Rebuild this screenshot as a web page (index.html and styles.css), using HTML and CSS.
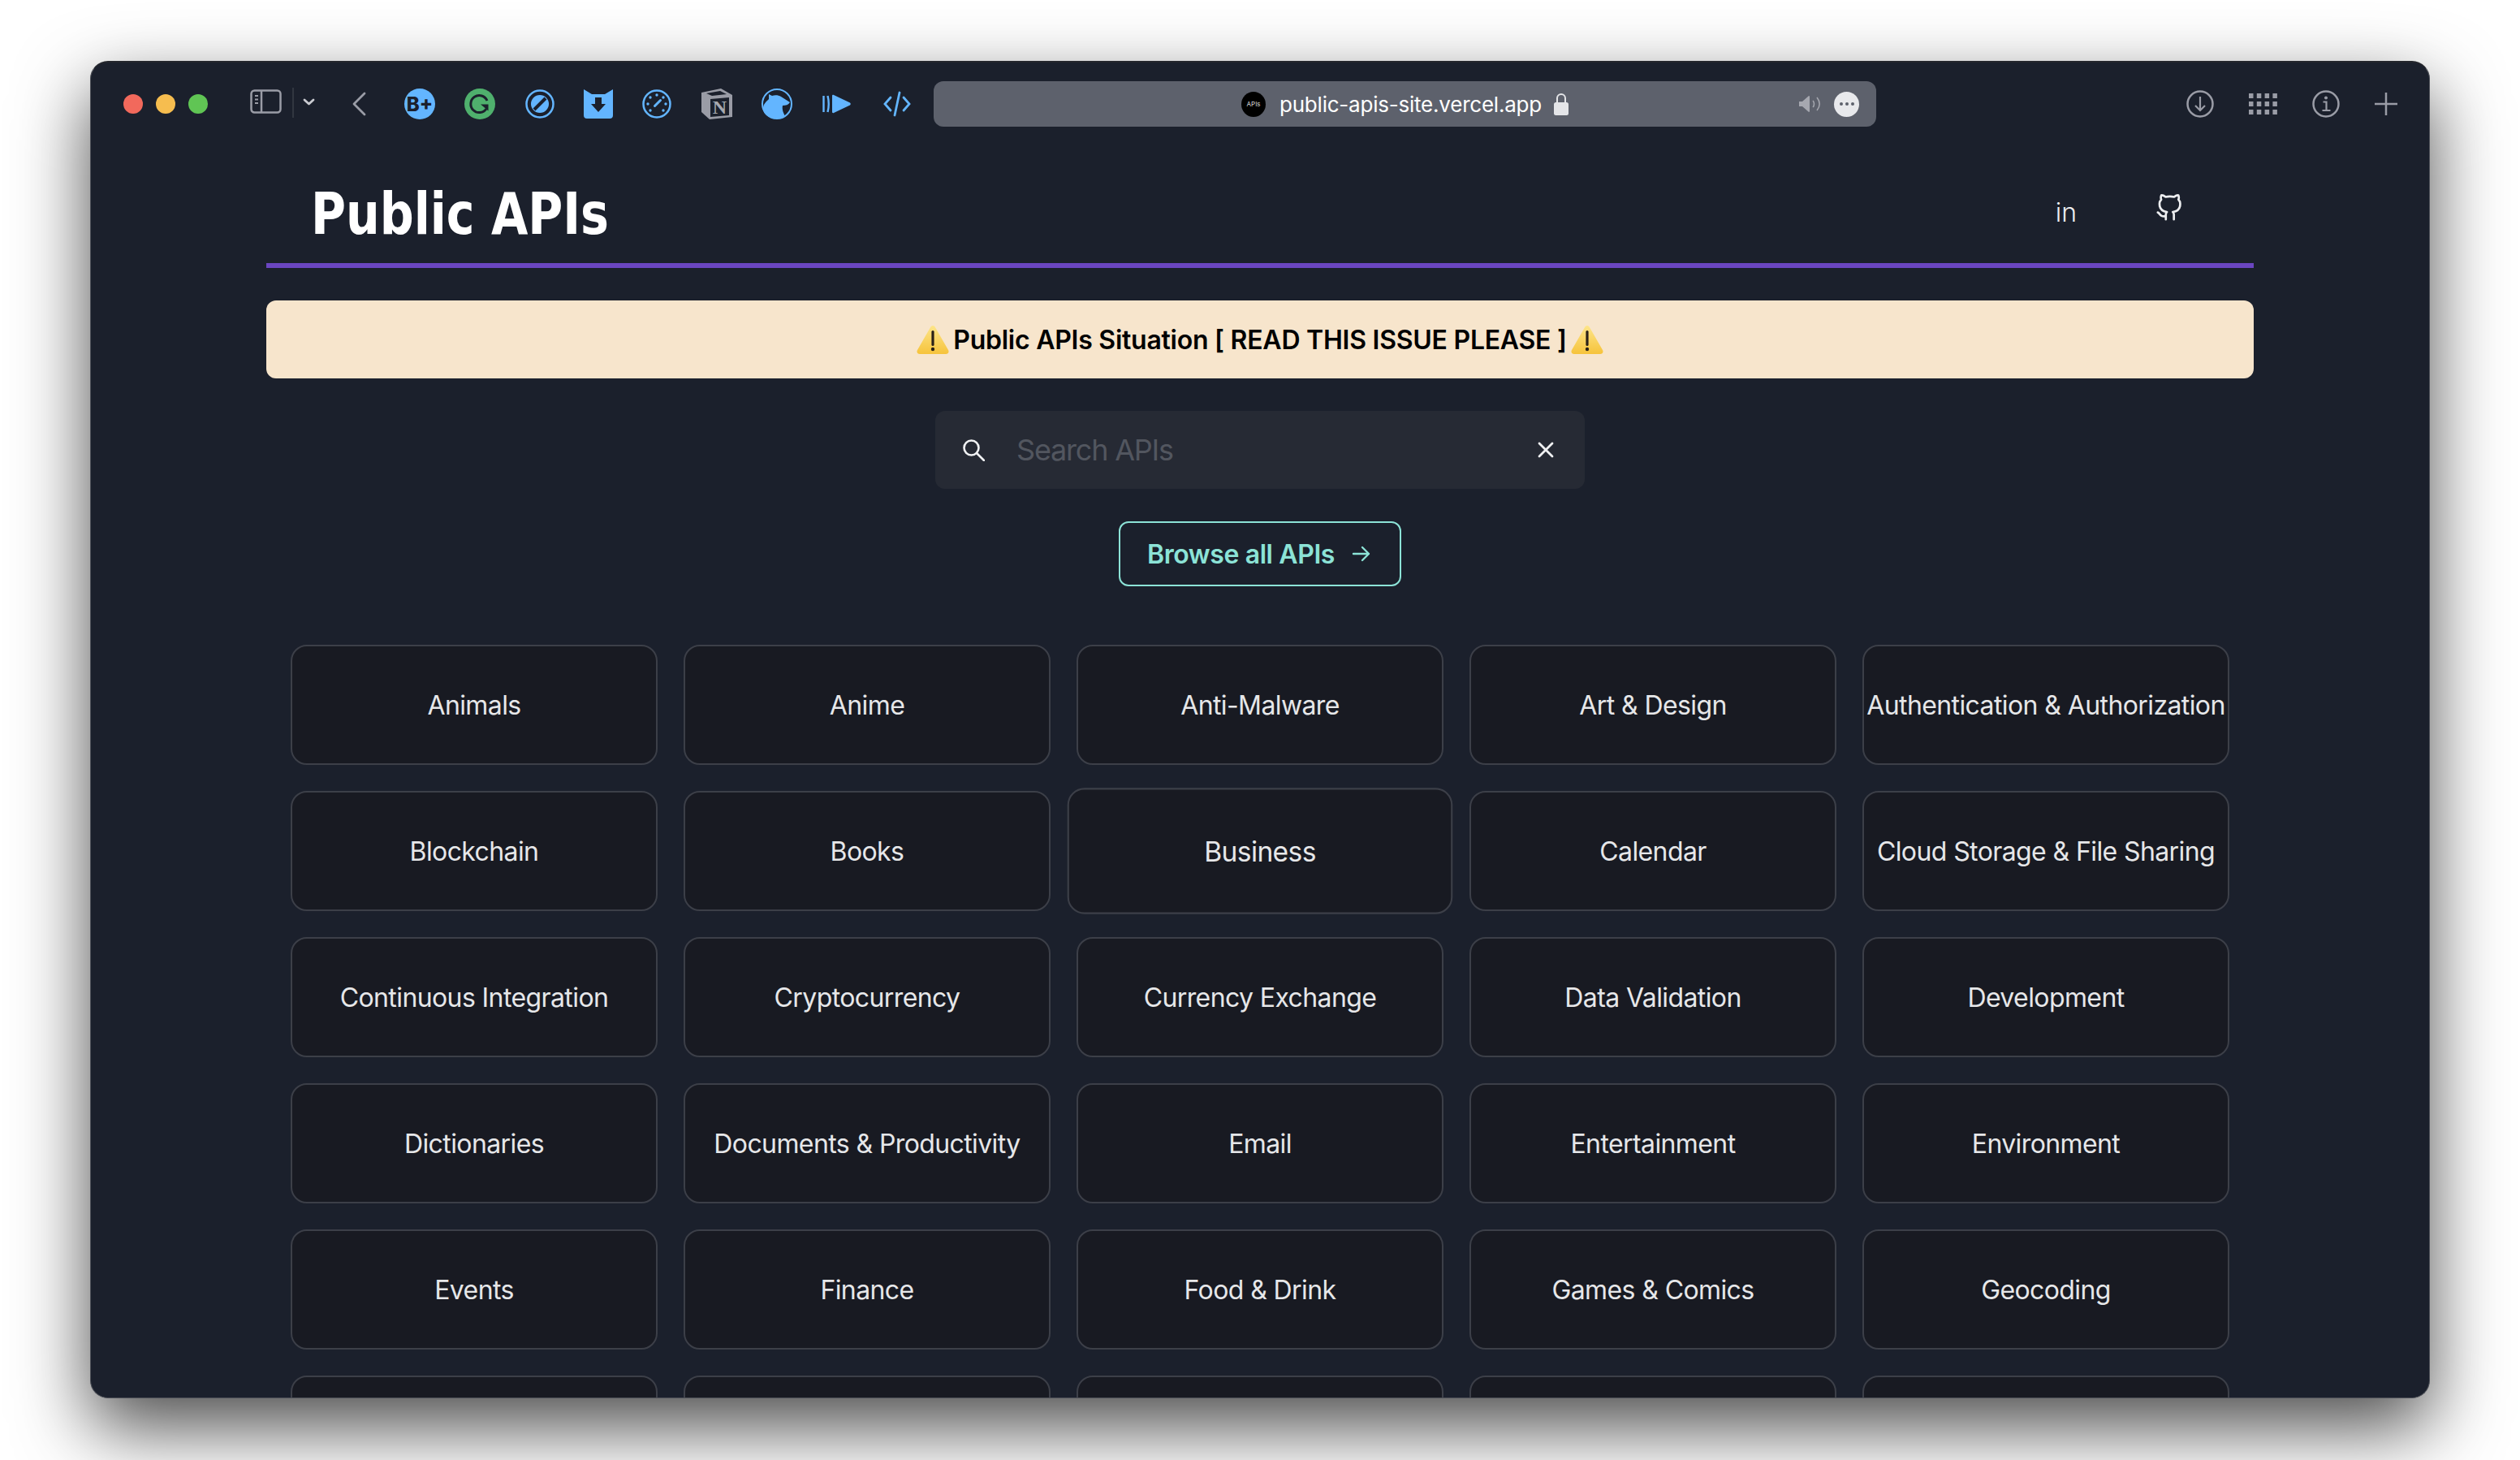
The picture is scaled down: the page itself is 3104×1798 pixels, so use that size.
FILE: index.html
```html
<!DOCTYPE html>
<html lang="en">
<head>
<meta charset="utf-8">
<title>Public APIs</title>
<link rel="stylesheet" href="styles.css">
</head>
<body>
<div class="window">
  <div class="toolbar">
    <div class="lights"><span class="light red"></span><span class="light yellow"></span><span class="light green"></span></div>
    <svg class="sidebar-btn" viewBox="0 0 84 40" width="84" height="40">
      <rect x="1.500" y="3.500" width="36" height="27" rx="4" fill="none" stroke="#9a9ca6" stroke-width="2.500"/>
      <path d="M14 4v26" stroke="#9a9ca6" stroke-width="2.500"/>
      <path d="M6 10h4M6 14.500h4M6 19h4" stroke="#9a9ca6" stroke-width="1.800"/>
      <path d="M53 0v37" stroke="#3a3e47" stroke-width="1.500"/>
      <path d="M67 15l5.500 5 5.500-5" fill="none" stroke="#c9cad0" stroke-width="2.800" stroke-linecap="round" stroke-linejoin="round"/>
    </svg>
    <svg class="back-btn" viewBox="0 0 25 32" width="25" height="32">
      <path d="M19 3L6 16l13 13" fill="none" stroke="#9a9ca6" stroke-width="2.800" stroke-linecap="round" stroke-linejoin="round"/>
    </svg>
    <div class="extensions">
      <svg class="ext" viewBox="0 0 74 44"><circle cx="37" cy="22" r="19" fill="#63b5ff"/><text x="37" y="31" text-anchor="middle" class="ext-bplus">B+</text></svg>
      <svg class="ext" viewBox="0 0 74 44"><circle cx="37" cy="22" r="19" fill="#4fb06d"/><path d="M46 18a10.500 10.500 0 1 0-1 10" fill="none" stroke="#1b202c" stroke-width="3"/><path d="M38 22.500h9.500v8z" fill="#1b202c"/></svg>
      <svg class="ext" viewBox="0 0 74 44"><circle cx="37" cy="22" r="16.500" fill="none" stroke="#63b5ff" stroke-width="2.500"/><circle cx="37" cy="22" r="11" fill="#63b5ff"/><path d="M30 29l14-14" stroke="#1b202c" stroke-width="4"/></svg>
      <svg class="ext ext-tight" viewBox="0 0 74 44"><path d="M19 4l10 6h16l10-6v32a4 4 0 0 1-4 4H23a4 4 0 0 1-4-4z" fill="#63b5ff"/><path d="M33 14h8v8h5l-9 10-9-10h5z" fill="#1b202c"/></svg>
      <svg class="ext ext-tight" viewBox="0 0 74 44"><circle cx="37" cy="22" r="16.500" fill="none" stroke="#63b5ff" stroke-width="2.500"/><path d="M34.500 24.500l7-7" stroke="#63b5ff" stroke-width="3" stroke-linecap="round"/><g fill="#63b5ff"><circle cx="37" cy="11" r="1.700"/><circle cx="29" cy="14" r="1.700"/><circle cx="45" cy="14" r="1.700"/><circle cx="26" cy="22" r="1.700"/><circle cx="48" cy="22" r="1.700"/><circle cx="29" cy="30" r="1.700"/><circle cx="45" cy="30" r="1.700"/></g></svg>
      <svg class="ext" viewBox="0 0 74 44"><path d="M18 8l24-5 14 8v27l-28 3-10-9z" fill="#9a9ca6"/><path d="M24 9l17-3 8 4-18 2z" fill="#1b202c"/><path d="M29 16l23-2v22l-23 2z" fill="#1b202c"/><text x="40.500" y="34" text-anchor="middle" class="ext-notion">N</text></svg>
      <svg class="ext" viewBox="0 0 74 44"><circle cx="37" cy="22" r="18" fill="none" stroke="#63b5ff" stroke-width="2"/><path d="M20 28c0-6 4-9 7-12l0-6 4 2c3-1 8-1 11 1l11 7c-2 3-5 4-9 4-1 5 1 9 3 13-3 2-7 3-10 3-9 0-17-5-17-12z" fill="#63b5ff"/></svg>
      <svg class="ext" viewBox="0 0 74 44"><path d="M20.500 12v20M25.500 12c1.500 6 1.500 14 0 20" fill="none" stroke="#63b5ff" stroke-width="2.400"/><path d="M31 12c0-1 1-1.500 2-1l20 9.500c1 .7 1 2.300 0 3L33 33c-1 .5-2 0-2-1z" fill="#63b5ff"/></svg>
      <svg class="ext" viewBox="0 0 74 44"><path d="M29 14l-7 8 7 8M45 14l7 8-7 8" fill="none" stroke="#63b5ff" stroke-width="2.800" stroke-linecap="round"/><path d="M40 8l-6 28" stroke="#63b5ff" stroke-width="2.800" stroke-linecap="round"/></svg>
    </div>
    <div class="urlbar">
      <span></span>
      <div class="url-center">
        <span class="favicon">APIs</span>
        <span class="url-text">public-apis-site.vercel.app</span>
        <svg class="lock" viewBox="0 0 18 28" width="18" height="28"><path d="M4 13V7a5 5 0 0 1 10 0v6" fill="none" stroke="#e4e5e8" stroke-width="2"/><rect y="12" width="18" height="16" rx="2.500" fill="#e4e5e8"/></svg>
      </div>
      <div class="url-right">
        <svg class="speaker" viewBox="0 0 28 22" width="28" height="22"><path d="M1 8h4l8-7c1 0 1 1 1 1v18s0 1-1 1l-8-7H1z" fill="#a6a8b0"/><path d="M18 7c2 2 2 6 0 8M23 3c4 5 4 11 0 16" fill="none" stroke="#a6a8b0" stroke-width="1.500"/></svg>
        <span class="more-dots"><i></i><i></i><i></i></span>
      </div>
    </div>
    <div class="tools">
      <svg class="tool" viewBox="0 0 34 34" width="34" height="34"><circle cx="17" cy="17" r="15.500" fill="none" stroke="#9a9ca6" stroke-width="2.500"/><path d="M17 8v17M11 19l6 6 6-6" fill="none" stroke="#9a9ca6" stroke-width="2.200"/></svg>
      <svg class="tool" viewBox="0 0 35 26" width="35" height="26"><g fill="#9a9ca6"><rect x="0" y="0" width="5.500" height="6"/><rect x="9.800" y="0" width="5.500" height="6"/><rect x="19.600" y="0" width="5.500" height="6"/><rect x="29.400" y="0" width="5.500" height="6"/><rect x="0" y="10" width="5.500" height="6"/><rect x="9.800" y="10" width="5.500" height="6"/><rect x="19.600" y="10" width="5.500" height="6"/><rect x="29.400" y="10" width="5.500" height="6"/><rect x="0" y="20" width="5.500" height="6"/><rect x="9.800" y="20" width="5.500" height="6"/><rect x="19.600" y="20" width="5.500" height="6"/><rect x="29.400" y="20" width="5.500" height="6"/></g></svg>
      <svg class="tool" viewBox="0 0 34 34" width="34" height="34"><circle cx="17" cy="17" r="15.500" fill="none" stroke="#9a9ca6" stroke-width="2.500"/><circle cx="17" cy="9.500" r="2" fill="#9a9ca6"/><path d="M13.500 14.500H17.500V25M12.500 25h10" fill="none" stroke="#9a9ca6" stroke-width="2.200"/></svg>
      <svg class="tool" viewBox="0 0 28 28" width="28" height="28"><path d="M14 0v28M0 14h28" stroke="#9a9ca6" stroke-width="2.500"/></svg>
    </div>
  </div>

  <main class="page">
    <header class="site-header">
      <h1 class="logo">Public APIs</h1>
      <nav class="site-nav">
        <span class="nav-in">in</span>
        <svg class="nav-github" viewBox="0 0 24 24" width="34" height="34"><path d="M9 19c-5 1.500-5-2.500-7-3m14 6v-3.870a3.370 3.370 0 0 0-.94-2.610c3.140-.35 6.440-1.540 6.440-7A5.440 5.440 0 0 0 20 4.770 5.070 5.070 0 0 0 19.910 1S18.730.65 16 2.480a13.380 13.380 0 0 0-7 0C6.270.65 5.090 1 5.090 1A5.070 5.070 0 0 0 5 4.770a5.440 5.440 0 0 0-1.500 3.750c0 5.420 3.300 6.610 6.440 7A3.370 3.370 0 0 0 9 18.130V22" fill="none" stroke="#edeef0" stroke-width="1.900" stroke-linecap="round" stroke-linejoin="round"/></svg>
      </nav>
    </header>

    <div class="banner">
      <svg class="warn" viewBox="0 0 40 36" width="40" height="36"><defs><linearGradient id="warnfill" x1="0" y1="0" x2="0" y2="1"><stop offset="0" stop-color="#fde58a"/><stop offset="1" stop-color="#f6c33b"/></linearGradient></defs><path d="M20 1c1.500 0 2.500 1 3.200 2.500L39 31c1.500 3-.5 5-3 5H4c-2.500 0-4.500-2-3-5L16.800 3.500C17.500 2 18.500 1 20 1z" fill="url(#warnfill)"/><path d="M20 8.500v16" stroke="#2a2118" stroke-width="3.200" stroke-linecap="round"/><circle cx="20" cy="30" r="2.200" fill="#2a2118"/></svg>
      <span class="banner-text">Public APIs Situation [ READ THIS ISSUE PLEASE ]</span>
      <svg class="warn" viewBox="0 0 40 36" width="40" height="36"><path d="M20 1c1.500 0 2.500 1 3.200 2.500L39 31c1.500 3-.5 5-3 5H4c-2.500 0-4.500-2-3-5L16.800 3.500C17.500 2 18.500 1 20 1z" fill="url(#warnfill)"/><path d="M20 8.500v16" stroke="#2a2118" stroke-width="3.200" stroke-linecap="round"/><circle cx="20" cy="30" r="2.200" fill="#2a2118"/></svg>
    </div>

    <div class="search">
      <svg class="search-icon" viewBox="0 0 28 28" width="28" height="28"><circle cx="11.500" cy="11.500" r="9" fill="none" stroke="#f0f1f3" stroke-width="2.600"/><path d="M18 18l9 9" stroke="#f0f1f3" stroke-width="2.600" stroke-linecap="round"/></svg>
      <span class="search-placeholder">Search APIs</span>
      <svg class="search-clear" viewBox="0 0 20 20" width="20" height="20"><path d="M2 2l16 16M18 2L2 18" stroke="#f0f1f3" stroke-width="2.800" stroke-linecap="round"/></svg>
    </div>

    <a class="browse">Browse all APIs
      <svg class="browse-arrow" viewBox="0 0 24 24" width="24" height="24"><path d="M2 12h19M13 4l8 8-8 8" fill="none" stroke="#8ce3d7" stroke-width="2.400" stroke-linecap="round" stroke-linejoin="round"/></svg>
    </a>

    <div class="grid">
      <a class="card">Animals</a><a class="card">Anime</a><a class="card">Anti-Malware</a><a class="card">Art &amp; Design</a><a class="card">Authentication &amp; Authorization</a>
      <a class="card">Blockchain</a><a class="card">Books</a><a class="card card-hover">Business</a><a class="card">Calendar</a><a class="card">Cloud Storage &amp; File Sharing</a>
      <a class="card">Continuous Integration</a><a class="card">Cryptocurrency</a><a class="card">Currency Exchange</a><a class="card">Data Validation</a><a class="card">Development</a>
      <a class="card">Dictionaries</a><a class="card">Documents &amp; Productivity</a><a class="card">Email</a><a class="card">Entertainment</a><a class="card">Environment</a>
      <a class="card">Events</a><a class="card">Finance</a><a class="card">Food &amp; Drink</a><a class="card">Games &amp; Comics</a><a class="card">Geocoding</a>
      <div class="card"></div><div class="card"></div><div class="card"></div><div class="card"></div><div class="card"></div>
    </div>
  </main>
</div>
</body>
</html>
```
FILE: styles.css
```css
* { box-sizing: border-box; }
html, body { margin: 0; height: 100%; }
body {
  background: #fff;
  padding: 75px 111px 76px 111px;
  overflow: hidden;
  font-family: Inter, "Liberation Sans", sans-serif;
  color: #eceded;
}
.window {
  height: 1647px;
  background: #1b202c;
  border-radius: 22px;
  overflow: hidden;
  border: 1px solid #4b4e56;
  border-top: 2px solid #24262c;
  box-shadow: 0 36px 90px rgba(0, 0, 0, .7);
}
.toolbar {
  height: 102px;
  display: flex;
  align-items: center;
  padding: 0 39px 0 40px;
}
.lights { display: flex; gap: 16px; }
.light { width: 24px; height: 24px; border-radius: 50%; }
.red { background: #f2695c; }
.yellow { background: #f6bd4f; }
.green { background: #60c554; }
.sidebar-btn { margin-left: 52px; flex: none; }
.back-btn { margin-left: 38px; flex: none; }
.extensions { display: flex; margin-left: 25px; margin-right: 8px; flex: none; }
.ext { width: 74px; height: 44px; display: block; }
.ext-tight { margin-left: -2px; }
.ext-bplus { font: 800 24px Inter, sans-serif; fill: #1b202c; }
.ext-notion { font: 700 24px "Liberation Serif", serif; fill: #a6a8b0; }
.urlbar {
  width: 1161px;
  height: 56px;
  flex: none;
  background: #5d616c;
  border-radius: 12px;
  display: grid;
  grid-template-columns: 1fr auto 1fr;
  align-items: center;
}
.url-center { display: flex; align-items: center; }
.favicon {
  width: 30px;
  height: 31px;
  border-radius: 50%;
  background: #000;
  color: #d8d8d8;
  font-size: 8px;
  display: flex;
  align-items: center;
  justify-content: center;
  margin-right: 17px;
}
.url-text { font-size: 26px; letter-spacing: -.22px; color: #fff; white-space: nowrap; }
.lock { margin-left: 15px; flex: none; }
.url-right { display: flex; align-items: center; justify-content: flex-end; gap: 16px; padding-right: 21px; }
.more-dots {
  width: 31px;
  height: 31px;
  border-radius: 50%;
  background: #e8e9ec;
  display: flex;
  align-items: center;
  justify-content: center;
  gap: 3px;
}
.more-dots i { width: 4px; height: 4px; border-radius: 50%; background: #5d616c; }
.tools { margin-left: auto; display: flex; align-items: center; gap: 43px; }
.tool { display: block; flex: none; }

.page { width: 2448px; margin: 0 auto; }
.site-header {
  height: 151px;
  border-bottom: 6px solid #6b46c1;
  display: flex;
  justify-content: space-between;
  padding: 0 87px 0 55px;
}
.logo {
  margin: 41px 0 0;
  font-family: "DejaVu Sans Condensed", "DejaVu Sans", sans-serif;
  font-size: 72px;
  line-height: 1.2;
  font-weight: 700;
  color: #fff;
  white-space: nowrap;
  transform: scaleX(.905);
  transform-origin: left center;
}
.site-nav { display: flex; align-items: flex-start; gap: 97px; }
.nav-in { margin-top: 63px; font-size: 32px; font-weight: 300; line-height: 40px; color: #edeef0; }
.nav-github { margin-top: 60px; display: block; }

.banner {
  margin-top: 40px;
  height: 96px;
  background: #f7e5cc;
  border-radius: 12px;
  display: flex;
  align-items: center;
  justify-content: center;
  gap: 5px;
}
.banner-text { font-size: 32px; font-weight: 600; letter-spacing: -.25px; color: #000; white-space: nowrap; }
.search {
  width: 800px;
  height: 96px;
  margin: 40px auto 0;
  background: #262a34;
  border-radius: 12px;
  display: flex;
  align-items: center;
  padding: 0 38px 0 33px;
}
.search-placeholder { margin-left: 39px; flex: 1; font-size: 36px; letter-spacing: -1.2px; color: #52565f; }
.browse {
  width: 348px;
  height: 80px;
  margin: 40px auto 0;
  border: 2px solid #8ce3d7;
  border-radius: 12px;
  display: flex;
  align-items: center;
  justify-content: center;
  gap: 21px;
  padding-right: 2px;
  font-size: 32px;
  font-weight: 600;
  letter-spacing: -.4px;
  color: #8ce3d7;
}
.browse-arrow { flex: none; }
.grid {
  margin-top: 72px;
  display: grid;
  grid-template-columns: repeat(5, 452px);
  grid-auto-rows: 148px;
  gap: 32px;
  justify-content: center;
}
.card {
  background: #181a22;
  border: 2px solid #3c3f48;
  border-radius: 20px;
  display: flex;
  align-items: center;
  justify-content: center;
  font-size: 32px;
  letter-spacing: -.6px;
  color: #e6e7e9;
  white-space: nowrap;
}
.card-hover { transform: scale(1.05); }
```
